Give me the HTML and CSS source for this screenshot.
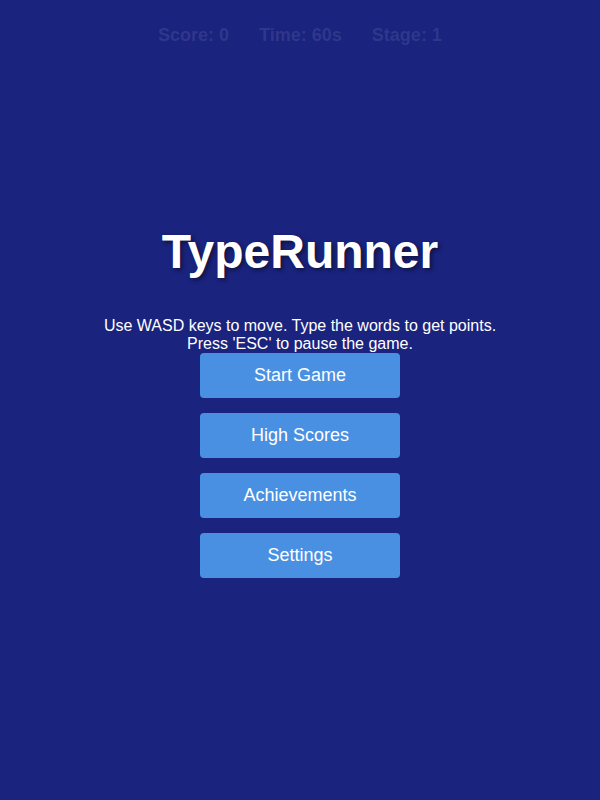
FILE: index.html
```html
<!DOCTYPE html>
<html>
<head>
<meta charset="utf-8">
<link rel="stylesheet" href="styles.css">
</head>
<body>
<div class="game">
  <div class="hud">
    <span class="hud-item">Score: 0</span>
    <span class="hud-item">Time: 60s</span>
    <span class="hud-item">Stage: 1</span>
  </div>
  <div class="menu">
    <h1 class="title">TypeRunner</h1>
    <p class="instructions">Use WASD keys to move. Type the words to get points.<br>Press 'ESC' to pause the game.</p>
    <div class="buttons">
      <button class="btn">Start Game</button>
      <button class="btn">High Scores</button>
      <button class="btn">Achievements</button>
      <button class="btn">Settings</button>
    </div>
  </div>
</div>
</body>
</html>
```
FILE: styles.css
```css
html, body {
  margin: 0;
  padding: 0;
}
body {
  background: #1a237e;
  font-family: "Liberation Sans", Arial, sans-serif;
  color: #fff;
}
.game {
  width: 600px;
  height: 800px;
  display: flex;
  flex-direction: column;
}
.hud {
  display: flex;
  justify-content: center;
  gap: 30px;
  padding-top: 25px;
  font-size: 18px;
  font-weight: bold;
  color: rgba(255, 255, 255, 0.1);
  line-height: 21px;
}
.menu {
  display: flex;
  flex-direction: column;
  align-items: center;
  padding-top: 178px;
}
.title {
  margin: 0;
  font-size: 48px;
  font-weight: bold;
  line-height: 55px;
  text-shadow: 2px 2px 4px rgba(0, 0, 0, 0.5);
}
.instructions {
  margin: 38px 0 0;
  font-size: 16px;
  line-height: 18px;
  text-align: center;
}
.buttons {
  display: flex;
  flex-direction: column;
  gap: 15px;
}
.btn {
  width: 200px;
  height: 45px;
  border: none;
  border-radius: 4px;
  background: #4a90e2;
  color: #fff;
  font-family: "Liberation Sans", Arial, sans-serif;
  font-size: 18px;
  padding: 0;
}
```
